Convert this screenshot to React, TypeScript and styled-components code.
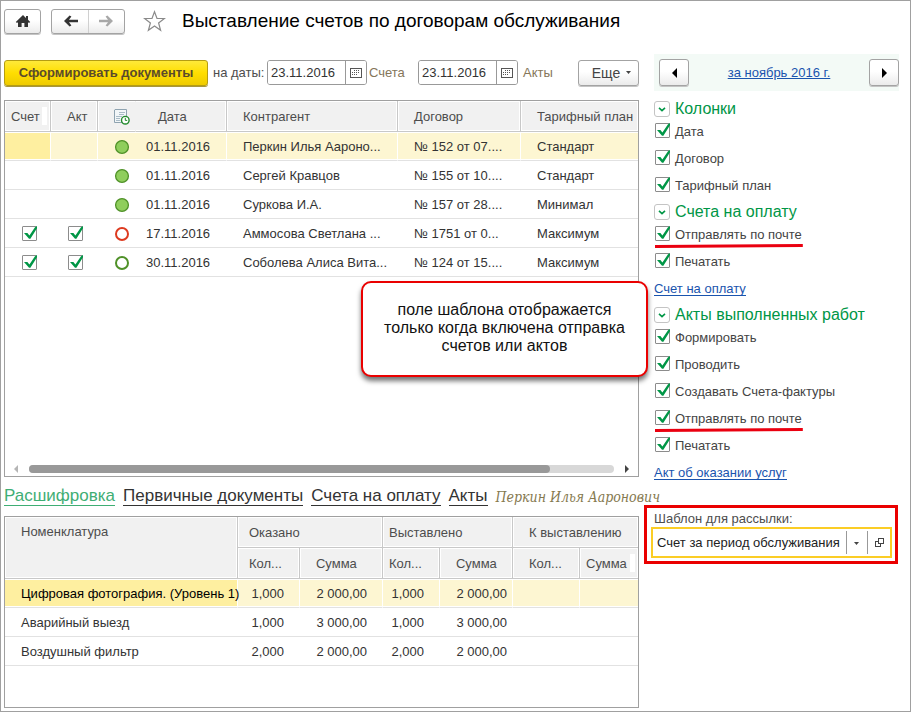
import React, { useId } from "react";
import styled, { createGlobalStyle, css } from "styled-components";

const GlobalStyle = createGlobalStyle`
  *, *::before, *::after { box-sizing: border-box; }
  body { margin: 0; background: #fff; }
  body, button, input, select { font-family: "Liberation Sans", Arial, sans-serif; font-size: 13px; }
  button, input { margin: 0; padding: 0; }
  a { color: #1a54ae; }
`;

const Page = styled.div`
  min-height: 100vh;
  display: flex;
  flex-direction: column;
  padding: 7px 11px 3px 3px;
  border: 1px solid #a0a0a0;
  color: #333;
  line-height: 16px;
`;

/* ---------- buttons ---------- */

const raised = css`
  display: inline-flex;
  align-items: center;
  justify-content: center;
  border: 1px solid #a3a3a3;
  border-radius: 3px;
  background: linear-gradient(#fff 45%, #ebebeb);
  box-shadow: 0 1px 0 #c4c4c4;
  color: #444;
`;

const Header = styled.header`
  display: flex;
  align-items: center;
  height: 26px;
  margin-bottom: 20px;
`;

const HomeButton = styled.button`
  ${raised}
  width: 37px;
  height: 25px;
`;

const HistoryGroup = styled.div`
  ${raised}
  height: 25px;
  margin: 0 18px 0 10px;
`;

const HistoryButton = styled.button`
  display: flex;
  align-items: center;
  justify-content: center;
  width: 36px;
  height: 23px;
  border: 0;
  background: none;
  color: #333;
  & + & { border-left: 1px solid #d0d0d0; }
  &:disabled { color: #a8a8a8; }
`;

const StarButton = styled.button`
  display: flex;
  border: 0;
  background: none;
  margin-right: 16px;
`;

const Title = styled.h1`
  margin: 0;
  font-size: 19px;
  font-weight: 400;
  line-height: 22px;
  color: #000;
  white-space: nowrap;
`;

const Body = styled.div`
  flex: 1;
  display: grid;
  grid-template-columns: minmax(0, 1fr) 255px;
  column-gap: 5px;
`;

const Main = styled.main`
  display: flex;
  flex-direction: column;
  padding-top: 5px;
`;

const Toolbar = styled.div`
  display: flex;
  align-items: center;
  height: 27px;
  margin-bottom: 14px;
  white-space: nowrap;
`;

const PrimaryButton = styled.button`
  width: 204px;
  height: 26px;
  border: 1px solid #b59d12;
  border-radius: 3px;
  background: linear-gradient(#ffe93a, #ffde00 50%, #efcb00);
  box-shadow: 0 1px 0 #a8963c;
  color: #5a4a2c;
  font-weight: 700;
`;

const DateLabel = styled.label`
  width: 59px;
  padding-left: 5px;
  color: #4d4d4d;
`;

const DateHint = styled.span<{ $width: number; $pad: number }>`
  width: ${(p) => p.$width}px;
  padding-left: ${(p) => p.$pad}px;
  color: #85765a;
`;

const DateGroup = styled.div`
  display: flex;
  width: 100px;
  height: 25px;
  border: 1px solid #999;
  border-radius: 3px;
  overflow: hidden;
`;

const DateInput = styled.input`
  flex: 1;
  min-width: 0;
  padding-left: 3px;
  border: 0;
  color: #333;
`;

const CalendarButton = styled.button`
  display: flex;
  align-items: center;
  justify-content: center;
  width: 21px;
  border: 0;
  border-left: 1px solid #999;
  background: #fff;
`;

const MoreButton = styled.button`
  ${raised}
  gap: 6px;
  width: 61px;
  height: 26px;
  margin-left: auto;
  padding-left: 6px;
  font-size: 14px;
`;

/* ---------- tables ---------- */

const TableFrame = styled.section<{ $basis: number; $grow: number }>`
  position: relative;
  display: flex;
  flex-direction: column;
  flex: ${(p) => p.$grow} 0 ${(p) => p.$basis}px;
  border: 1px solid #a0a0a0;
`;

const Table = styled.table`
  width: 100%;
  table-layout: fixed;
  border-collapse: separate;
  border-spacing: 0;
`;

const thShadow = {
  single: "inset 0 0 0 1px #fff",
  first: "inset 1px 1px #fff, inset 0 -1px #fff",
  last: "inset -1px -1px #fff, inset 0 1px #fff",
};

const Th = styled.th<{ $pad: number; $join?: "first" | "last"; $top?: boolean }>`
  position: relative;
  height: 31px;
  padding: ${(p) => (p.$top ? "7px" : "1px")} 0 0 ${(p) => p.$pad}px;
  border-right: 1px solid ${(p) => (p.$join === "first" ? "#f1f1f1" : "#c8c8c8")};
  border-bottom: 1px solid #c8c8c8;
  background: #f1f1f1;
  box-shadow: ${(p) => thShadow[p.$join ?? "single"]};
  color: #4d4d4d;
  font-weight: 400;
  text-align: left;
  vertical-align: ${(p) => (p.$top ? "top" : "middle")};
  white-space: nowrap;
  &:last-child { border-right: 0; }
  svg { display: block; }
`;

const HeaderMark = styled.span`
  position: absolute;
  top: 6px;
  right: 3px;
  width: 5px;
  height: 18px;
  background: #fff;
`;

const Td = styled.td<{ $pad?: number; $right?: number; $joined?: boolean; $current?: boolean }>`
  height: 29px;
  padding: 1px ${(p) => p.$right ?? 0}px 0 ${(p) => p.$pad ?? 0}px;
  border-bottom: 1px solid #e2e2e2;
  color: ${(p) => (p.$current ? "#000" : "#333")};
  text-align: ${(p) => (p.$right === undefined ? "left" : "right")};
  white-space: nowrap;
  svg { display: block; }
  tr[aria-selected="true"] & {
    border-right: ${(p) => (p.$joined ? "0" : "1px solid #fff")};
    padding-right: ${(p) => Math.max((p.$right ?? 0) - 1, 0)}px;
    background: ${(p) => (p.$current ? "#feefa0" : "#fdf6d2")};
    box-shadow: inset 0 1px #fff, inset 0 -1px #fff;
  }
`;

const ScrollBar = styled.div`
  display: flex;
  align-items: center;
  gap: 11px;
  height: 15px;
  margin-top: auto;
  padding: 0 9px 0 9px;
`;

const ScrollTrack = styled.div`
  flex: 1;
  height: 8px;
  border-radius: 4px;
  background: #d8d8d8;
`;

const ScrollThumb = styled.div`
  width: 89%;
  height: 8px;
  border-radius: 4px;
  background: #999;
`;

const Callout = styled.aside`
  position: absolute;
  top: 180px;
  right: -10px;
  width: 287px;
  padding: 18px 10px 20px;
  border: 2px solid #ea0000;
  border-radius: 10px;
  background: #fff;
  box-shadow: 0 4px 5px rgba(0, 0, 0, 0.55);
  color: #111;
  font-size: 16px;
  line-height: 18px;
  text-align: center;
`;

const Tabs = styled.nav`
  display: flex;
  align-items: center;
  gap: 8px;
  height: 39px;
  white-space: nowrap;
`;

const Tab = styled.a<{ $active?: boolean }>`
  border-bottom: 1px solid currentColor;
  color: ${(p) => (p.$active ? "#3fae74" : "#333")};
  font-size: 17px;
  line-height: 18px;
  text-decoration: none;
`;

const ClientName = styled.em`
  color: #85794f;
  font-family: "DejaVu Serif Condensed", "DejaVu Serif", serif;
  font-size: 14px;
`;

/* ---------- side panel ---------- */

const Side = styled.aside`
  display: flex;
  flex-direction: column;
`;

const PeriodBar = styled.div`
  display: flex;
  align-items: center;
  justify-content: space-between;
  height: 37px;
  margin: 0 0 7px 10px;
  padding-left: 5px;
  background: #f3faf6;
`;

const PeriodButton = styled.button`
  ${raised}
  width: 30px;
  height: 27px;
`;

const SideLink = styled.a`
  align-self: flex-start;
  height: 16px;
  border-bottom: 1px solid currentColor;
  line-height: 17px;
  text-decoration: none;
`;

const Group = styled.section`
  display: flex;
  flex-direction: column;
  gap: 11px;
  margin: 0 0 8px 10px;
`;

const GroupTitle = styled.h2`
  display: flex;
  align-items: center;
  gap: 5px;
  height: 22px;
  margin: 0 0 -8px;
  color: #009646;
  font-size: 16px;
  font-weight: 400;
  line-height: 22px;
  white-space: nowrap;
`;

const FoldButton = styled.button`
  display: flex;
  align-items: center;
  justify-content: center;
  width: 16px;
  height: 16px;
  border: 1px solid #c4c4c4;
  border-radius: 3px;
  background: #fff;
`;

const Option = styled.div`
  position: relative;
  display: flex;
  align-items: center;
  align-self: flex-start;
  gap: 4px;
  height: 16px;
  label { padding-top: 1px; color: #444; }
`;

const Underline = styled.svg`
  position: absolute;
  left: 1px;
  top: 17px;
  width: 100%;
  height: 6px;
`;

const BoxWrap = styled.span`
  position: relative;
  display: block;
  width: 17px;
  height: 16px;
  svg { position: absolute; left: 0; top: 0; pointer-events: none; }
`;

const Box = styled.input`
  display: block;
  appearance: none;
  width: 15px;
  height: 15px;
  margin-left: 1px;
  border: 1px solid #8c8c8c;
  border-radius: 1px;
  background: #fff;
  & + svg { visibility: hidden; }
  &:checked + svg { visibility: visible; }
`;

const TemplateBox = styled.div`
  margin: 17px 1px 0 0;
  padding: 3px 3px 3px 4px;
  border: 3px solid #ea0000;
  label { display: block; padding-left: 3px; color: #4d4d4d; }
`;

const TemplateField = styled.div`
  display: flex;
  align-items: center;
  height: 31px;
  border: 2px solid #fbcd25;
`;

const SelectWrap = styled.div`
  position: relative;
  flex: 1;
  svg { position: absolute; right: 8px; top: 11px; pointer-events: none; }
  &::after {
    content: "";
    position: absolute;
    right: 20px;
    top: 0;
    height: 23px;
    border-left: 1px solid #999;
  }
`;

const Select = styled.select`
  display: block;
  appearance: none;
  width: 100%;
  height: 23px;
  padding: 0 22px 0 4px;
  border: 0;
  background: #fff;
  color: #222;
`;

const OpenButton = styled.button`
  display: flex;
  align-items: center;
  justify-content: center;
  width: 23px;
  height: 23px;
  border: 0;
  border-left: 1px solid #999;
  background: #fff;
`;

/* ---------- icons ---------- */

const HomeIcon = () => (
  <svg width="16" height="14" viewBox="0 0 16 14" fill="#333">
    <path d="M8 1 0.8 8 2 9 3 8.2V13h3.6V9h2.8v4H13V8.2L14 9l1.2-1L13 5.8V2h-2v1.9z" />
  </svg>
);

const ArrowIcon = ({ flip }: { flip?: boolean }) => (
  <svg width="15" height="12" viewBox="0 0 15 12">
    <path
      d={flip ? "M0 4.8h9L6.6 1.6 8.4 0.4 14 6l-5.6 5.6-1.8-1.2L9 7.2H0z" : "M15 4.8H6l2.4-3.2L6.6 0.4 1 6l5.6 5.6 1.8-1.2L6 7.2h9z"}
      fill="currentColor"
    />
  </svg>
);

const StarIcon = () => (
  <svg width="23" height="22" viewBox="0 0 23 22" fill="#fff" stroke="#8a8a8a" strokeWidth="1.2">
    <path d="M11.5 1.8 14 8.5h7.4L15.6 13l2 7.3-6.1-4.4-6.1 4.4 2-7.3L1.6 8.5H9z" />
  </svg>
);

const CalendarIcon = () => (
  <svg width="12" height="10" viewBox="0 0 12 10" shapeRendering="crispEdges">
    <path d="M0.5 0.5h11v9H0.5z" fill="#fff" stroke="#555" />
    <path d="M4 2.5h6M2 4.5h8M2 6.5h6" stroke="#555" strokeDasharray="1 1" />
  </svg>
);

const CaretIcon = () => (
  <svg width="5" height="3" viewBox="0 0 5 3" fill="#444">
    <path d="M0 0h5L2.5 3z" />
  </svg>
);

const TriangleIcon = ({ dir, size, color }: { dir: "left" | "right"; size: number; color: string }) => (
  <svg width={size / 2} height={size} viewBox="0 0 5 10" fill={color}>
    <path d={dir === "left" ? "M5 0v10L0 5z" : "M0 0v10l5-5z"} />
  </svg>
);

const CheckIcon = () => (
  <svg width="17" height="16" viewBox="0 0 17 16" fill="#009646">
    <path d="M3 7h3.4l2 2.4L14 1.2 16 0v2.2L9.4 12.8H8z" />
  </svg>
);

const ChevronIcon = () => (
  <svg width="8" height="5" viewBox="0 0 8 5" fill="none" stroke="#009646" strokeWidth="1.6">
    <path d="M1 0.8 4 3.6 7 0.8" />
  </svg>
);

const JournalIcon = () => (
  <svg width="16" height="16" viewBox="0 0 16 16">
    <path d="M1 0.5h11.5v13H0.5V1z" fill="#f2f6f8" stroke="#8fa3b0" />
    <path d="M5 3.5h6M5 5.5h5M2 7.5h6M2 9.5h4M2 11.5h4" stroke="#a9bbc6" />
    <circle cx="11.3" cy="11.2" r="3.8" fill="#fff" stroke="#218a2b" strokeWidth="1.4" />
    <path d="M11.3 8.8v2.6h1.9" fill="none" stroke="#218a2b" />
  </svg>
);

const fills = { done: ["#8fce5c", "#4f9128"], late: ["#fff", "#dd3a1f"], open: ["#fff", "#4f9128"] };
type State = keyof typeof fills;

const StateIcon = ({ state }: { state: State }) => (
  <svg width="16" height="16" viewBox="0 0 16 16">
    <circle cx="8" cy="8" r={state === "done" ? 6.4 : 6} fill={fills[state][0]} stroke={fills[state][1]} strokeWidth={state === "done" ? 1.3 : 2} />
  </svg>
);

const OpenIcon = () => (
  <svg width="9" height="9" viewBox="0 0 9 9" fill="#fff" stroke="#444" shapeRendering="crispEdges">
    <path d="M0.5 3.5h5v5h-5z" />
    <path d="M3.5 0.5h5v5h-5z" />
  </svg>
);

/* ---------- parts ---------- */

const CheckBox = ({ id, label }: { id?: string; label?: string }) => (
  <BoxWrap>
    <Box type="checkbox" id={id} aria-label={label} defaultChecked />
    <CheckIcon />
  </BoxWrap>
);

const OptionRow = ({ text, marked }: { text: string; marked?: boolean }) => {
  const id = useId();
  return (
    <Option>
      <CheckBox id={id} />
      <label htmlFor={id}>{text}</label>
      {marked && (
        <Underline viewBox="0 0 144 6" preserveAspectRatio="none" aria-hidden="true">
          <path d="M0 3.5 144 2.5" stroke="#ea0010" strokeWidth="3" />
        </Underline>
      )}
    </Option>
  );
};

const OptionGroup = ({ title, options, link }: { title: string; options: [string, boolean?][]; link?: string }) => (
  <Group>
    <GroupTitle>
      <FoldButton aria-label={`Свернуть: ${title}`}><ChevronIcon /></FoldButton>
      {title}
    </GroupTitle>
    {options.map(([text, marked]) => <OptionRow key={text} text={text} marked={marked} />)}
    {link && <SideLink href="#form">{link}</SideLink>}
  </Group>
);

const DateField = ({ id, label }: { id: string; label: string }) => (
  <DateGroup>
    <DateInput id={id} aria-label={label} defaultValue="23.11.2016" />
    <CalendarButton aria-label="Выбрать дату"><CalendarIcon /></CalendarButton>
  </DateGroup>
);

const invoices: { due: boolean; state: State; date: string; client: string; contract: string; plan: string }[] = [
  { due: false, state: "done", date: "01.11.2016", client: "Перкин Илья Аароно...", contract: "№ 152 от 07....", plan: "Стандарт" },
  { due: false, state: "done", date: "01.11.2016", client: "Сергей Кравцов", contract: "№ 155 от 10....", plan: "Стандарт" },
  { due: false, state: "done", date: "01.11.2016", client: "Суркова И.А.", contract: "№ 157 от 28....", plan: "Минимал" },
  { due: true, state: "late", date: "17.11.2016", client: "Аммосова Светлана ...", contract: "№ 1751 от 0...", plan: "Максимум" },
  { due: true, state: "open", date: "30.11.2016", client: "Соболева Алиса Вита...", contract: "№ 124 от 15....", plan: "Максимум" },
];

const services = [
  ["Цифровая фотография. (Уровень 1)", "1,000", "2 000,00"],
  ["Аварийный выезд", "1,000", "3 000,00"],
  ["Воздушный фильтр", "2,000", "2 000,00"],
];

const Columns = ({ widths }: { widths: (number | null)[] }) => (
  <colgroup>{widths.map((w, i) => <col key={i} width={w ?? undefined} />)}</colgroup>
);

export default function App() {
  return (
    <Page>
      <GlobalStyle />
      <Header>
        <HomeButton aria-label="Начальная страница"><HomeIcon /></HomeButton>
        <HistoryGroup>
          <HistoryButton aria-label="Назад"><ArrowIcon /></HistoryButton>
          <HistoryButton aria-label="Вперед" disabled><ArrowIcon flip /></HistoryButton>
        </HistoryGroup>
        <StarButton aria-label="В избранное"><StarIcon /></StarButton>
        <Title>Выставление счетов по договорам обслуживания</Title>
      </Header>

      <Body>
        <Main>
          <Toolbar>
            <PrimaryButton>Сформировать документы</PrimaryButton>
            <DateLabel htmlFor="invoice-date">на даты:</DateLabel>
            <DateField id="invoice-date" label="Дата счета" />
            <DateHint $width={51} $pad={2}>Счета</DateHint>
            <DateField id="act-date" label="Дата акта" />
            <DateHint $width={40} $pad={5}>Акты</DateHint>
            <MoreButton>Еще <CaretIcon /></MoreButton>
          </Toolbar>

          <TableFrame $basis={377} $grow={2}>
            <Table>
              <Columns widths={[46, 47, 38, 91, null, 123, 117]} />
              <thead>
                <tr>
                  <Th $pad={6}>Счет<HeaderMark /></Th>
                  <Th $pad={16}>Акт</Th>
                  <Th $pad={16} $join="first" aria-label="Состояние"><JournalIcon /></Th>
                  <Th $pad={22} $join="last">Дата</Th>
                  <Th $pad={16}>Контрагент</Th>
                  <Th $pad={16}>Договор</Th>
                  <Th $pad={16}>Тарифный план</Th>
                </tr>
              </thead>
              <tbody>
                {invoices.map((row, i) => (
                  <tr key={row.client} aria-selected={i === 0}>
                    <Td $pad={16} $current={i === 0}>{row.due && <CheckBox label="Счет" />}</Td>
                    <Td $pad={16}>{row.due && <CheckBox label="Акт" />}</Td>
                    <Td $pad={16} $joined><StateIcon state={row.state} /></Td>
                    <Td $pad={10}>{row.date}</Td>
                    <Td $pad={16}>{row.client}</Td>
                    <Td $pad={16}>{row.contract}</Td>
                    <Td $pad={16} $joined>{row.plan}</Td>
                  </tr>
                ))}
              </tbody>
            </Table>
            <ScrollBar>
              <TriangleIcon dir="left" size={8} color="#b5b5b5" />
              <ScrollTrack><ScrollThumb /></ScrollTrack>
              <TriangleIcon dir="right" size={8} color="#444" />
            </ScrollBar>
            <Callout>поле шаблона отображается только когда включена отправка счетов или актов</Callout>
          </TableFrame>

          <Tabs>
            <Tab href="#details" $active>Расшифровка</Tab>
            <Tab href="#sources">Первичные документы</Tab>
            <Tab href="#invoices">Счета на оплату</Tab>
            <Tab href="#acts">Акты</Tab>
            <ClientName>Перкин Илья Ааронович</ClientName>
          </Tabs>

          <TableFrame $basis={192} $grow={1}>
            <Table>
              <Columns widths={[null, 62, 83, 57, 73, 67, 58]} />
              <thead>
                <tr>
                  <Th rowSpan={2} $pad={16} $top>Номенклатура</Th>
                  <Th colSpan={2} $pad={11}>Оказано</Th>
                  <Th colSpan={2} $pad={6}>Выставлено</Th>
                  <Th colSpan={2} $pad={16}>К выставлению</Th>
                </tr>
                <tr>
                  <Th $pad={11}>Кол...</Th>
                  <Th $pad={16}>Сумма</Th>
                  <Th $pad={6}>Кол...</Th>
                  <Th $pad={16}>Сумма</Th>
                  <Th $pad={16}>Кол...</Th>
                  <Th $pad={6}>Сумма<HeaderMark /></Th>
                </tr>
              </thead>
              <tbody>
                {services.map(([name, count, sum], i) => (
                  <tr key={name} aria-selected={i === 0}>
                    <Td $pad={16} $current={i === 0}>{name}</Td>
                    <Td $right={16}>{count}</Td>
                    <Td $right={16}>{sum}</Td>
                    <Td $right={16}>{count}</Td>
                    <Td $right={6}>{sum}</Td>
                    <Td />
                    <Td $joined />
                  </tr>
                ))}
              </tbody>
            </Table>
          </TableFrame>
        </Main>

        <Side>
          <PeriodBar>
            <PeriodButton aria-label="Предыдущий месяц"><TriangleIcon dir="left" size={10} color="#000" /></PeriodButton>
            <a href="#period">за ноябрь 2016 г.</a>
            <PeriodButton aria-label="Следующий месяц"><TriangleIcon dir="right" size={10} color="#000" /></PeriodButton>
          </PeriodBar>
          <OptionGroup title="Колонки" options={[["Дата"], ["Договор"], ["Тарифный план"]]} />
          <OptionGroup title="Счета на оплату" options={[["Отправлять по почте", true], ["Печатать"]]} link="Счет на оплату" />
          <OptionGroup
            title="Акты выполненных работ"
            options={[["Формировать"], ["Проводить"], ["Создавать Счета-фактуры"], ["Отправлять по почте", true], ["Печатать"]]}
            link="Акт об оказании услуг"
          />
          <TemplateBox>
            <label htmlFor="template">Шаблон для рассылки:</label>
            <TemplateField>
              <SelectWrap>
                <Select id="template"><option>Счет за период обслуживания</option></Select>
                <CaretIcon />
              </SelectWrap>
              <OpenButton aria-label="Открыть шаблон"><OpenIcon /></OpenButton>
            </TemplateField>
          </TemplateBox>
        </Side>
      </Body>
    </Page>
  );
}
